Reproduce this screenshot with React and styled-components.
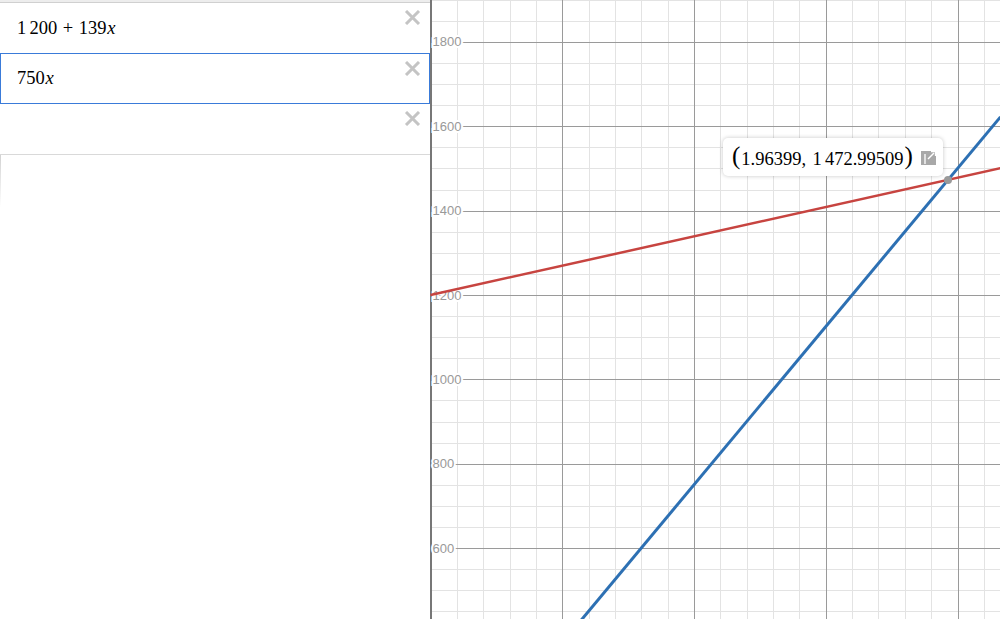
import React from 'react';
import styled, {createGlobalStyle} from 'styled-components';

const GlobalStyle = createGlobalStyle`
	html, body {
		margin: 0;
		padding: 0;
		background: #fff;
		overflow: hidden;
		font-family: "Liberation Sans", Arial, sans-serif;
	}
`;

const Layout = styled.div`
	display: flex;
	width: 1000px;
	height: 619px;
	overflow: hidden;
`;

const Panel = styled.div`
	width: 430px;
	flex-shrink: 0;
	display: flex;
	flex-direction: column;
	background: #fff;
`;

const TopStrip = styled.div`
	height: 2px;
	background: #ededed;
	border-bottom: 1px solid #d0d0d0;
`;

const ExpressionRow = styled.div`
	display: flex;
	justify-content: space-between;
	height: ${p => (p.$selected ? '49px' : '50px')};
	padding: 0 9px 0 17px;
	border-bottom: 1px solid #d9d9d9;
	${p =>
		p.$selected &&
		`
		margin-top: -1px;
		border: 1px solid #3a7bd9;
		padding-left: 16px;
		padding-right: 8px;
	`}

	&:last-of-type {
		height: 51px;
	}
`;

const MathText = styled.div`
	align-self: center;
	font-family: "Liberation Serif", "Times New Roman", serif;
	font-size: 18.5px;
	color: #000;
	white-space: pre;
`;

const Var = styled.i`
	font-style: italic;
	margin-left: 0.04em;
	padding-right: 0.06em;
`;

const Op = styled.span`
	margin: 0 0.3em;
`;

const Gap = styled.span`
	display: inline-block;
	width: ${p => p.$w || '0.17em'};
`;

const CloseButton = styled.button`
	align-self: flex-start;
	margin-top: 7px;
	padding: 0;
	width: 17px;
	height: 15px;
	background: none;
	border: none;
	display: flex;

	svg {
		display: block;
	}
`;

const Fade = styled.div`
	width: 1px;
	height: 52px;
	background: linear-gradient(#d2d2d2, rgba(255, 255, 255, 0));
`;

const GraphArea = styled.div`
	position: relative;
	flex: 1;
	height: 619px;
	overflow: hidden;
	background: #fff;
`;

const Tooltip = styled.div`
	position: absolute;
	left: 293px;
	top: 138px;
	width: 220px;
	height: 38px;
	box-sizing: border-box;
	display: flex;
	align-items: center;
	gap: 7px;
	padding: 0 6px 0 8px;
	background: #fff;
	border-radius: 5px;
	box-shadow: 0 0 4px rgba(0, 0, 0, 0.22);
	font-family: "Liberation Serif", "Times New Roman", serif;
	font-size: 18.5px;
	color: #000;
	white-space: pre;
`;

const Paren = styled.span`
	font-size: 25px;
	line-height: 1;
	position: relative;
	top: -1px;
	margin: 0 1px;
`;

const CloseIcon = () => (
	<svg width="17" height="15" viewBox="0 0 17 15">
		<path d="M2 1 L15 14 M15 1 L2 14" stroke="#c4c4c4" strokeWidth="3" />
	</svg>
);

const NoteIcon = () => (
	<svg width="16" height="15" viewBox="0 0 16 15">
		<rect x="0" y="1" width="15" height="14" fill="#a8a8a8" />
		<path d="M4 4 V14" stroke="#fff" strokeWidth="1.3" />
		<path d="M7 9 L13 3" stroke="#fff" strokeWidth="1.5" />
		<path d="M10 1.5 H14.5 V6" stroke="#fff" strokeWidth="1.3" fill="none" />
	</svg>
);

// graph scale
const SX = 263.5;
const SY = 0.421667;
const W = 570;
const H = 619;
const px = x => 0.5 + x * SX;
const py = v => 295 - (v - 1200) * SY;

function Grid() {
	const minor = [];
	const major = [];
	for (let i = 1; px(i * 0.1) < W; i++) {
		const x = Math.round(px(i * 0.1)) + 0.5;
		(i % 5 === 0 ? major : minor).push(<line key={'v' + i} x1={x} x2={x} y1={0} y2={H} />);
	}
	for (let v = 400; v <= 1950; v += 50) {
		const y = Math.round(py(v)) + 0.5;
		(v % 200 === 0 ? major : minor).push(<line key={'h' + v} x1={0} x2={W} y1={y} y2={y} />);
	}
	const labels = [];
	for (let v = 600; v <= 1800; v += 200) {
		labels.push(
			<text key={v} x={2.5} y={py(v) + 4.5}>
				{v}
			</text>
		);
	}
	return (
		<>
			<g stroke="#e3e3e3" strokeWidth="1">{minor}</g>
			<g stroke="#9a9a9a" strokeWidth="1">{major}</g>
			<line x1={1} x2={1} y1={0} y2={H} stroke="#777" strokeWidth="2" />
			<g
				fill="#999"
				fontFamily='"Liberation Sans", Arial, sans-serif'
				fontSize="13"
				stroke="#fff"
				strokeWidth="4"
				style={{paintOrder: 'stroke'}}
			>
				{labels}
			</g>
		</>
	);
}

function Curves() {
	const red = v => 1200 + 139 * v;
	const blue = v => 750 * v;
	const x2 = W / SX;
	const bx1 = (1200 - (H + 10 - 295) / SY) / 750;
	const ix = 1.96399;
	return (
		<>
			<line x1={px(0)} y1={py(red(0))} x2={px(x2)} y2={py(red(x2))} stroke="#c74440" strokeWidth="2.5" />
			<line x1={px(bx1)} y1={py(blue(bx1))} x2={px(x2)} y2={py(blue(x2))} stroke="#2d70b3" strokeWidth="3" />
			<circle cx={px(ix)} cy={py(red(ix))} r="4" fill="#9a9a9a" />
		</>
	);
}

const expressions = [
	{
		id: 1,
		tex: (
			<>
				1<Gap />200<Op>+</Op>139<Var>x</Var>
			</>
		),
	},
	{id: 2, tex: <>750<Var>x</Var></>, selected: true},
	{id: 3, tex: null},
];

export default function App() {
	return (
		<>
			<GlobalStyle />
			<Layout>
				<Panel>
					<TopStrip />
					{expressions.map(e => (
						<ExpressionRow key={e.id} $selected={e.selected}>
							<MathText>{e.tex}</MathText>
							<CloseButton>
								<CloseIcon />
							</CloseButton>
						</ExpressionRow>
					))}
					<Fade />
				</Panel>
				<GraphArea>
					<svg width={W} height={H}>
						<Grid />
						<Curves />
					</svg>
					<Tooltip>
						<span>
							<Paren>(</Paren>1.96399,<Gap $w="0.35em" />1<Gap />472.99509<Paren>)</Paren>
						</span>
						<NoteIcon />
					</Tooltip>
				</GraphArea>
			</Layout>
		</>
	);
}
